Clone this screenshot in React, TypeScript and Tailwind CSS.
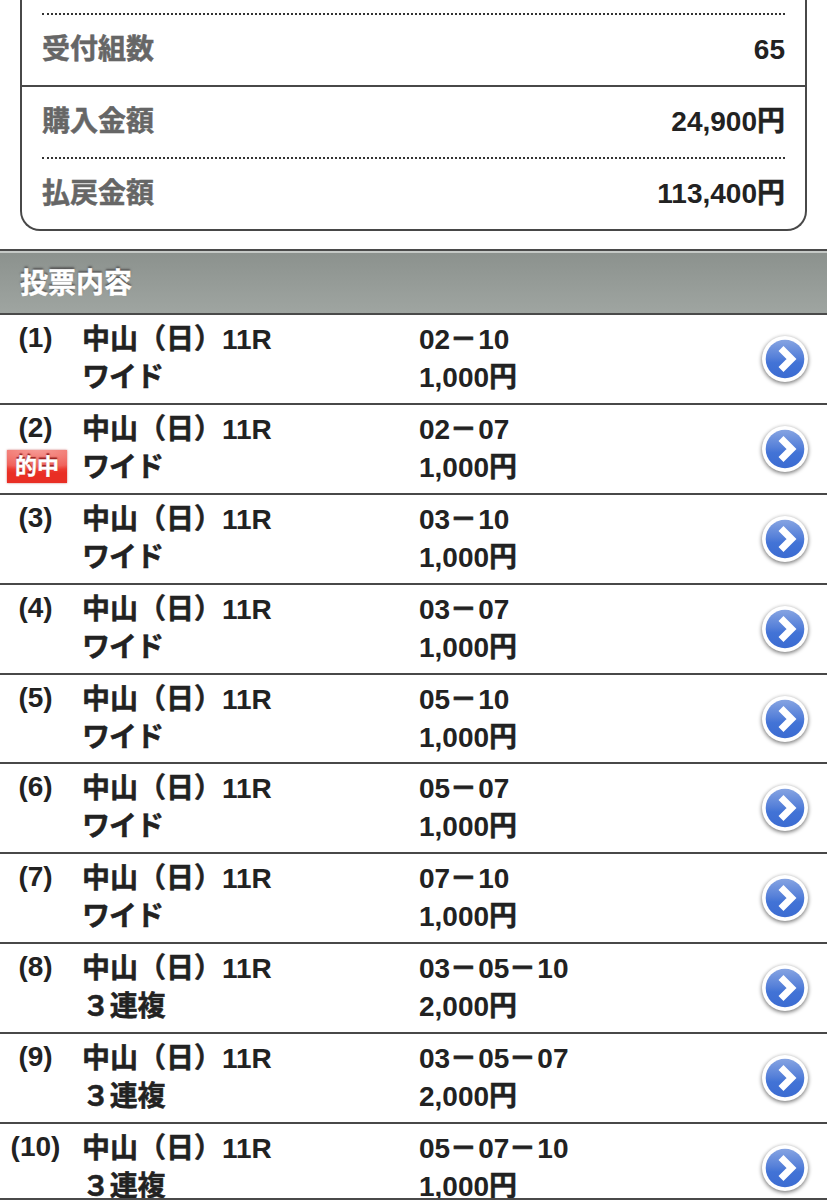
import React from 'react';

const summary = [
  { label: '受付組数', value: '65', dotted: true },
  { label: '購入金額', value: '24,900円', dotted: false },
  { label: '払戻金額', value: '113,400円', dotted: true },
];

const bets = [
  { type: 'ワイド', combo: '02－10', amount: '1,000円' },
  { type: 'ワイド', combo: '02－07', amount: '1,000円', hit: true },
  { type: 'ワイド', combo: '03－10', amount: '1,000円' },
  { type: 'ワイド', combo: '03－07', amount: '1,000円' },
  { type: 'ワイド', combo: '05－10', amount: '1,000円' },
  { type: 'ワイド', combo: '05－07', amount: '1,000円' },
  { type: 'ワイド', combo: '07－10', amount: '1,000円' },
  { type: '３連複', combo: '03－05－10', amount: '2,000円' },
  { type: '３連複', combo: '03－05－07', amount: '2,000円' },
  { type: '３連複', combo: '05－07－10', amount: '1,000円' },
];

// Japanese glyphs are drawn a touch heavier than the digits beside them
const Mixed: React.FC<{ text: string }> = ({ text }) => (
  <>
    {text.split(/([\x20-\x7e]+|－)/).filter(Boolean).map((part, i) => {
      if (/^[\x20-\x7e]+$/.test(part)) return <span key={i}>{part}</span>;
      if (part === '－') return <span key={i} className="inline-block translate-x-[-0.5px] scale-x-[0.94] [-webkit-text-stroke:0.8px]">{part}</span>;
      return <span key={i} className="[-webkit-text-stroke:0.5px]">{part}</span>;
    })}
  </>
);

const ArrowButton: React.FC = () => (
  <svg width="56" height="56" viewBox="0 0 56 56" className="block shrink-0">
    <defs>
      <linearGradient id="blue" x1="0" y1="0" x2="0" y2="1">
        <stop offset="0" stopColor="#86a4e2" />
        <stop offset="0.45" stopColor="#5781d9" />
        <stop offset="0.6" stopColor="#4273d6" />
        <stop offset="1" stopColor="#3c6cd2" />
      </linearGradient>
      <filter id="soft" x="-20%" y="-20%" width="140%" height="140%">
        <feGaussianBlur stdDeviation="1.9" />
      </filter>
    </defs>
    <circle cx="28" cy="28.4" r="23.2" fill="#000" opacity="0.55" filter="url(#soft)" />
    <circle cx="28" cy="27" r="23" fill="#fff" />
    <circle cx="28" cy="27" r="19.3" fill="url(#blue)" />
    <path d="M24 16.5 L34.5 27 L24 37.5" fill="none" stroke="#fff" strokeWidth="7" />
  </svg>
);

export default function App() {
  return (
    <div className="h-[1200px] w-[827px] overflow-hidden border-b-2 border-[#4a4a4a] bg-white font-['Liberation_Sans','Noto_Sans_CJK_JP',sans-serif] text-[28px] leading-[38px] font-bold text-[#222]">
      {/* Totals */}
      <div className="mx-5 h-[231px] rounded-b-[20px] border-2 border-t-0 border-[#484848]">
        {summary.map((row, idx) => (
          <div key={row.label} className={idx === 0 ? 'pt-[13px]' : ''}>
            {row.dotted ? (
              <div className="mx-5 border-t-2 border-dotted border-[#333]"></div>
            ) : (
              <div className="border-t-2 border-[#484848]"></div>
            )}
            <div className="flex h-[70px] items-center justify-between px-5">
              <span className="text-[#666] [-webkit-text-stroke:0.5px]">{row.label}</span>
              <span><Mixed text={row.value} /></span>
            </div>
          </div>
        ))}
      </div>

      {/* Section bar */}
      <div className="mt-[18px] flex h-[66px] items-center border-y-2 border-[#4a4a4a] bg-linear-to-b from-[#8b918d] to-[#9fa5a1] pt-[3px] pl-5 shadow-[inset_0_2px_0_#c5c9c6]">
        <h2 className="text-white [-webkit-text-stroke:0.4px] [text-shadow:0_-2px_2px_#555]">投票内容</h2>
      </div>

      {/* Bets */}
      {bets.map((bet, idx) => (
        <div key={idx} className="flex h-[89.9px] border-b-2 border-[#484848]">
          <div className="w-[82px] shrink-0 pt-[4px]">
            <div className="w-[71px] text-center">({idx + 1})</div>
            {bet.hit && (
              <div className="mt-[3px] ml-[7px] h-[33px] w-[60px] bg-[radial-gradient(90px_24px_at_50%_0,#f59a94_0%,#f0625b_70%,#ec3a30_85%,#e92e24_100%)] text-center text-[22px] leading-[34px] text-white shadow-[0_0_2px_#c77] [-webkit-text-stroke:0.4px] [text-shadow:0_-2px_1px_#922]">
                的中
              </div>
            )}
          </div>
          <div className="w-[337px] shrink-0 pt-[6px]">
            <div><Mixed text="中山（日）11R" /></div>
            <div className={bet.type === 'ワイド' ? 'tracking-[-1px]' : 'tracking-[-0.2px]'}><Mixed text={bet.type} /></div>
          </div>
          <div className="w-[338px] shrink-0 pt-[6px]">
            <div><Mixed text={bet.combo} /></div>
            <div><Mixed text={bet.amount} /></div>
          </div>
          <div className="pt-[17px]">
            <ArrowButton />
          </div>
        </div>
      ))}
    </div>
  );
}
